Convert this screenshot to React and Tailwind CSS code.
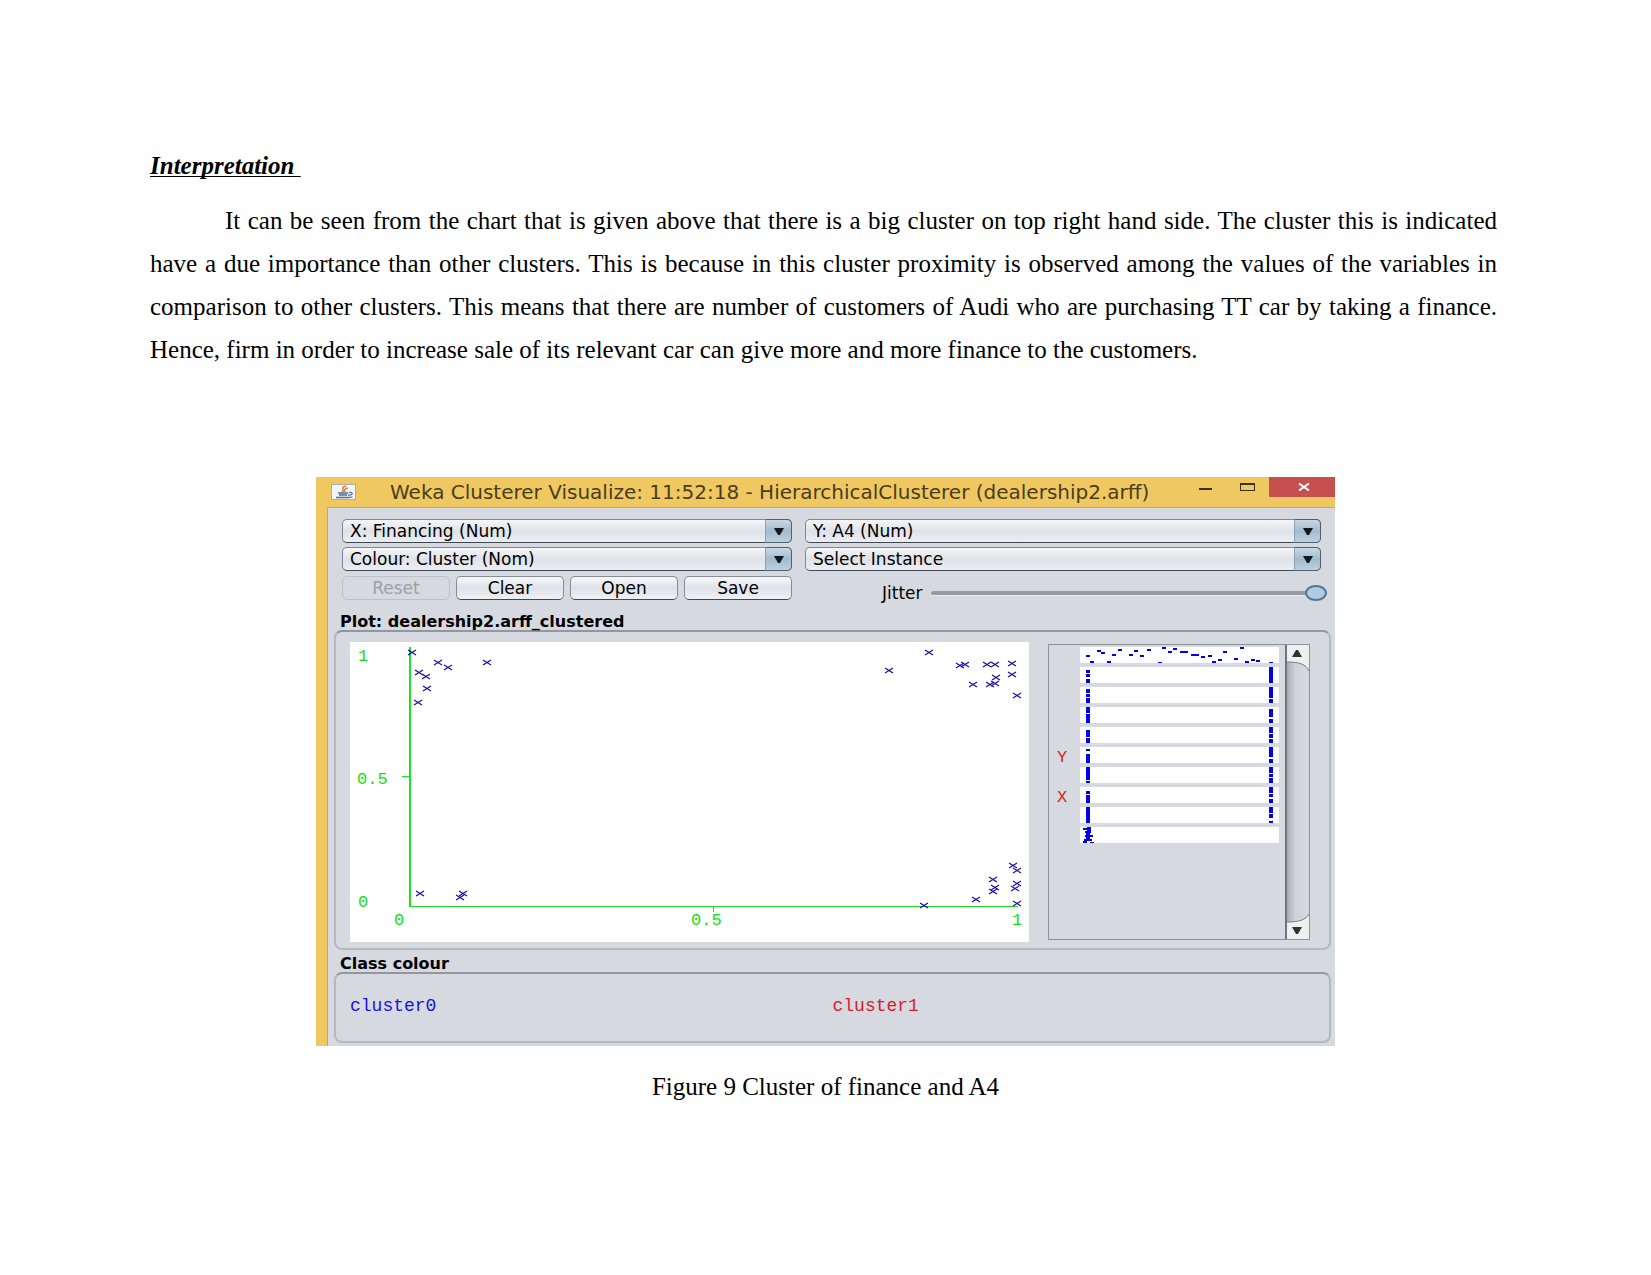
import { useState } from 'react'

// Instance markers, in plot area units (679 x 300)
const points = [
  [62, 10], [88, 20], [98, 25], [137, 20], [69, 30], [76, 34], [77, 46], [68, 60],
  [579, 10], [539, 28], [610, 23], [615, 22], [637, 22], [645, 22], [662, 21], [662, 32],
  [646, 35], [623, 42], [640, 42], [645, 41], [667, 53],
  [70, 251], [110, 255], [113, 251],
  [574, 263], [626, 257], [643, 237], [645, 245], [643, 249],
  [663, 223], [667, 228], [667, 241], [665, 246], [667, 261]
]

// First attribute strip: one dot per instance
const instanceDots = [
  [8, 9], [12, 15], [19, 4], [23, 6], [29, 15], [34, 8], [40, 3], [51, 8], [56, 4], [62, 9],
  [69, 3], [80, 16], [84, 1], [90, 5], [95, 2], [102, 5], [106, 5], [113, 8], [117, 8], [123, 10],
  [130, 9], [134, 15], [140, 13], [145, 5], [156, 12], [162, 1], [167, 15], [173, 13], [178, 14], [191, 16]
]

// Remaining strips: [start, end] runs at the low and high value
const attributes = [
  { low: [[3, 6], [7, 10], [12, 16]], high: [[0, 16]] },
  { low: [[2, 6], [7, 10], [11, 16]], high: [[0, 11], [12, 16]] },
  { low: [[0, 6], [7, 16]], high: [[2, 10], [12, 16]] },
  { low: [[3, 10], [11, 16]], high: [[0, 6], [7, 11], [12, 16]] },
  { low: [[2, 4], [7, 16]], high: [[0, 10], [12, 16]], axis: 'Y' },
  { low: [[0, 13], [14, 16]], high: [[0, 6], [7, 10], [11, 16]] },
  { low: [[4, 7], [8, 16]], high: [[0, 6], [7, 10], [12, 16]], axis: 'X' },
  { low: [[0, 16]], high: [[0, 6], [7, 11], [14, 16]] }
]

const classDots = [
  [9, 1], [5, 2], [9, 3], [7, 5], [9, 5], [8, 7], [7, 9], [11, 9], [8, 11], [6, 13], [10, 13], [5, 15], [12, 16]
]

function JavaIcon() {
  return (
    <svg viewBox="0 0 25 16" className="h-4 w-[25px] shrink-0" aria-hidden="true">
      <rect x="0.5" y="0.5" width="24" height="15" fill="#f4f5f6" stroke="#a9adb3" />
      <path d="M15 2 C8 4 15 5 11 8 M17 4 C12 5 15 6 13 8" fill="none" stroke="#e8833a" strokeWidth="1.6" />
      <path d="M7 9 H17 M8 11 H16 M18 8.5 C23 8 22 11.5 17 11 M5 13.5 H17 C20 13.5 21 13 21 12.5" fill="none" stroke="#4c7199" strokeWidth="1.3" />
    </svg>
  )
}

function Combo({ label, value }) {
  return (
    <div className="relative h-6">
      <select
        aria-label={label}
        defaultValue={value}
        className="block h-6 w-full appearance-none rounded-[5px] border border-[#7f8792] border-b-[#3f4954] bg-linear-to-b from-[#f5f6f8] via-[#dfe2e7] to-[#eceef2] pl-[7px] pr-8 text-[17px] leading-[22px] text-black"
      >
        <option>{value}</option>
      </select>
      <span className="pointer-events-none absolute inset-y-0 right-0 flex w-[27px] items-center justify-center rounded-r-[5px] border border-[#4d6173] border-l-[#8ba3b5] bg-linear-to-b from-[#c9d9e4] via-[#a3bbcc] to-[#bdd1df]">
        <svg viewBox="0 0 10 7" className="h-[7px] w-[10px]" aria-hidden="true">
          <path d="M0 0H10L6 7H4Z" fill="#101820" />
        </svg>
      </span>
    </div>
  )
}

function PushButton({ children, disabled }) {
  return (
    <button
      disabled={disabled}
      className="h-6 flex-1 rounded-[5px] border border-[#858c96] border-b-[#3f4954] bg-linear-to-b from-[#f7f8fa] via-[#dfe2e7] to-[#eff1f4] text-[17px] leading-[22px] text-black disabled:border-[#bcc1c8] disabled:bg-none disabled:text-[#9b9fa6]"
    >
      {children}
    </button>
  )
}

function Plot() {
  return (
    <svg viewBox="0 0 679 300" className="min-w-0 flex-1 bg-white" role="img" aria-label="Scatter plot">
      <g fill="none" stroke="#22dd22">
        <path d="M60 5V265" strokeWidth="2" />
        <path d="M59 264.5H668M52 134.5H60M363.5 265V270" />
      </g>
      <g fill="#11e011" fontFamily="'Liberation Mono', monospace" fontSize="17">
        <text x="8" y="19">1</text>
        <text x="7" y="142">0.5</text>
        <text x="8" y="265">0</text>
        <text x="44" y="283">0</text>
        <text x="341" y="283">0.5</text>
        <text x="662" y="283">1</text>
      </g>
      {points.map(([x, y], i) => (
        <path
          key={i}
          d={`M${x - 4} ${y - 2}L${x + 4} ${y + 3}M${x + 4} ${y - 2}L${x - 4} ${y + 3}`}
          stroke="#1a0aa8"
          strokeWidth="1.2"
        />
      ))}
    </svg>
  )
}

function Strip({ axis, children }) {
  return (
    <div className="flex h-4 items-center">
      <span className="w-[31px] pl-2 pt-[6px] font-['Liberation_Mono',monospace] text-[17px] leading-4 text-[#dd1c1c]">{axis}</span>
      <svg viewBox="0 0 199 16" className="h-4 w-[199px] bg-white" fill="#0000ee" shapeRendering="crispEdges" aria-hidden="true">
        {children}
      </svg>
    </div>
  )
}

function AttributePanel() {
  return (
    <div className="flex w-[262px] shrink-0 border border-[#8d9299]">
      <div className="flex flex-1 flex-col gap-1 pt-[2px]">
        <Strip>
          {instanceDots.map(([x, y], i) => (
            <rect key={i} x={x - 2} y={y - 1} width="4" height="2" />
          ))}
        </Strip>
        {attributes.map((attr, i) => (
          <Strip key={i} axis={attr.axis}>
            {attr.low.map(([from, to]) => (
              <rect key={from} x="6" y={from} width="4" height={to - from} />
            ))}
            {attr.high.map(([from, to]) => (
              <rect key={from} x="189" y={from} width="4" height={to - from} />
            ))}
          </Strip>
        ))}
        <Strip>
          {classDots.map(([x, y], i) => (
            <rect key={i} x={x - 2} y={y - 1} width="4" height="2" />
          ))}
        </Strip>
      </div>
      <div className="flex w-6 flex-col border-l-2 border-[#70757c] bg-linear-to-r from-[#a9adb3] via-[#d0d3d9] via-40% to-[#d6d9df]">
        <button aria-label="Scroll up">
          <svg viewBox="0 0 22 26" className="block h-[26px] w-[22px]" aria-hidden="true">
            <path d="M0 0H22V26C19 19 12 17 0 17Z" fill="#eff0f2" />
            <path d="M0 17C12 17 19 19 22 26" fill="none" stroke="#777c84" />
            <path d="M5 12L9 5H11L15 12Z" fill="#333" />
          </svg>
        </button>
        <div className="flex-1" />
        <button aria-label="Scroll down">
          <svg viewBox="0 0 22 26" className="block h-[26px] w-[22px]" aria-hidden="true">
            <path d="M0 26H22V1C19 7 12 9 0 9Z" fill="#eff0f2" />
            <path d="M0 9C12 9 19 7 22 1" fill="none" stroke="#777c84" />
            <path d="M5 14L9 21H11L15 14Z" fill="#333" />
          </svg>
        </button>
      </div>
    </div>
  )
}

function WekaWindow() {
  const [jitter, setJitter] = useState(100)

  return (
    <div className="w-full max-w-[1019px] bg-[#efc862] font-['DejaVu_Sans',sans-serif]">
      {/* Title bar */}
      <div className="flex h-[30px] items-start">
        <div className="flex h-[30px] min-w-0 flex-1 items-center pl-[15px]">
          <JavaIcon />
          <span className="ml-[34px] whitespace-nowrap text-[20px] leading-6 text-[#4a3c1c]">
            Weka Clusterer Visualize: 11:52:18 - HierarchicalClusterer (dealership2.arff)
          </span>
        </div>
        <button aria-label="Minimize" className="flex h-5 w-10 items-center justify-center pt-1">
          <span className="h-[2px] w-[13px] bg-[#3b3018]" />
        </button>
        <button aria-label="Maximize" className="flex h-5 w-11 items-center justify-center">
          <span className="h-2 w-[15px] border border-t-2 border-[#3b3018]" />
        </button>
        <button aria-label="Close" className="flex h-5 w-[66px] items-center justify-center bg-[#c6504f] pl-1">
          <svg viewBox="0 0 12 8" className="h-2 w-3" aria-hidden="true">
            <path d="M1 0.5L11 7.5M11 0.5L1 7.5" stroke="#fff" strokeWidth="2" />
          </svg>
        </button>
      </div>

      <div className="ml-[11px] border-l border-t border-[#b9a878] bg-[#d6d9df] pb-[3px] pt-[11px]">
        {/* Controls */}
        <div className="grid grid-cols-[450fr_516fr] gap-x-[13px] gap-y-1 pl-[14px] pr-[14px]">
          <Combo label="X axis" value="X: Financing (Num)" />
          <Combo label="Y axis" value="Y: A4 (Num)" />
          <Combo label="Colour" value="Colour: Cluster (Nom)" />
          <Combo label="Select mode" value="Select Instance" />
          <div className="flex gap-[6px] pt-px">
            <PushButton disabled>Reset</PushButton>
            <PushButton>Clear</PushButton>
            <PushButton>Open</PushButton>
            <PushButton>Save</PushButton>
          </div>
          <div className="-mr-[6px] flex h-[26px] items-end gap-2 pl-[77px]">
            <label htmlFor="jitter" className="text-[17px] leading-4">Jitter</label>
            <input
              id="jitter"
              type="range"
              value={jitter}
              onChange={e => setJitter(e.target.value)}
              className="h-4 min-w-0 flex-1 appearance-none bg-transparent [&::-webkit-slider-runnable-track]:h-[5px] [&::-webkit-slider-runnable-track]:rounded-full [&::-webkit-slider-runnable-track]:border-b [&::-webkit-slider-runnable-track]:border-[#eceef1] [&::-webkit-slider-runnable-track]:bg-[#959aa2] [&::-webkit-slider-thumb]:-mt-[6px] [&::-webkit-slider-thumb]:h-4 [&::-webkit-slider-thumb]:w-[22px] [&::-webkit-slider-thumb]:appearance-none [&::-webkit-slider-thumb]:rounded-[50%] [&::-webkit-slider-thumb]:border-2 [&::-webkit-slider-thumb]:border-[#4f7699] [&::-webkit-slider-thumb]:bg-[#b1cce0]"
            />
          </div>
        </div>

        {/* Plot */}
        <h2 className="mt-[13px] pl-3 text-[16px] font-bold leading-4">Plot: dealership2.arff_clustered</h2>
        <div className="ml-[6px] mr-1 flex items-start gap-[19px] rounded-[8px] border-2 border-[#b4b8bf] border-t-[#92979f] px-[14px] pb-[6px] pt-[10px] pr-[19px]">
          <Plot />
          <div className="flex self-stretch pb-[2px] pt-[2px]">
            <AttributePanel />
          </div>
        </div>

        {/* Class colour */}
        <h2 className="mt-[6px] pl-3 text-[16px] font-bold leading-4">Class colour</h2>
        <div className="ml-[6px] mr-1 grid h-[71px] grid-cols-2 items-center rounded-[8px] border-2 border-[#b4b8bf] border-t-[#92979f] pl-[14px] pr-[14px] pb-1 font-['Liberation_Mono',monospace] text-[18px] leading-5">
          <span className="text-[#1a12e0]">cluster0</span>
          <span className="text-[#e01a2a]">cluster1</span>
        </div>
      </div>
    </div>
  )
}

export default function App() {
  return (
    <main className="min-h-screen bg-white pt-[144px] font-['Liberation_Serif',serif] text-[25px] leading-[43px] text-black">
      <section className="pl-[150px] pr-[154px]">
        <h1 className="font-bold italic underline decoration-1 underline-offset-2 [text-decoration-skip-ink:none]">
          Interpretation&nbsp;
        </h1>
        <p className="mt-3 text-justify indent-[75px]">
          It can be seen from the chart that is given above that there is a big cluster on top right hand side. The
          cluster this is indicated have a due importance than other clusters. This is because in this cluster
          proximity is observed among the values of the variables in comparison to other clusters. This means that
          there are number of customers of Audi who are purchasing TT car by taking a finance. Hence, firm in order to
          increase sale of its relevant car can give more and more finance to the customers.
        </p>
      </section>

      <figure className="mt-[106px] flex flex-col items-center">
        <WekaWindow />
        <figcaption className="mt-[19px]">Figure 9 Cluster of finance and A4</figcaption>
      </figure>
    </main>
  )
}
